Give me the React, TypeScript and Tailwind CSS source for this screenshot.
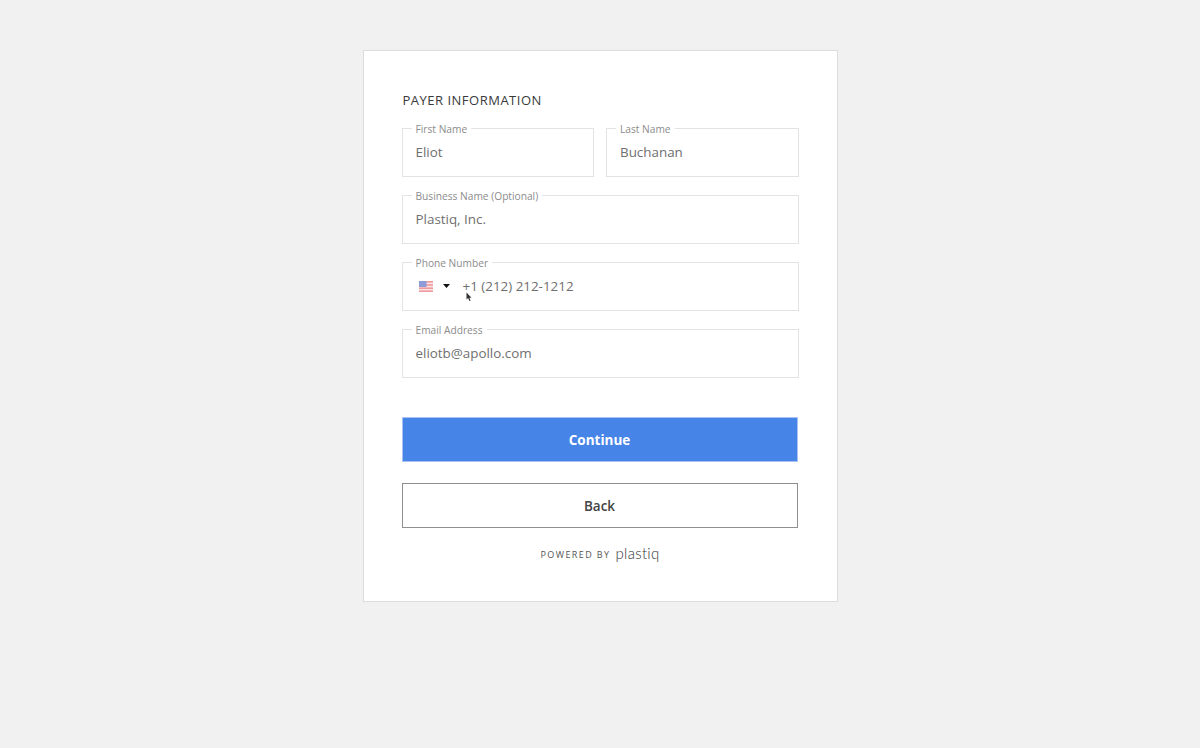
import React from "react";

function Field({ label, children, className = "" }: { label: string; children: React.ReactNode; className?: string }) {
  return (
    <fieldset className={`relative h-[49px] min-w-0 border border-[#e3e3e3] ${className}`}>
      <legend className="ml-[9px] h-0 px-[4px] text-[10.2px] leading-[0px] text-[#8c8c8c]">{label}</legend>
      <div className="flex h-[46px] items-center pl-[13px] text-[13.4px] leading-[20px] text-[#6f6f6f]">{children}</div>
    </fieldset>
  );
}

function Flag() {
  return (
    <svg width="14" height="11" viewBox="0 0 14 11" className="shrink-0">
      <rect width="14" height="11" fill="#fbe3e3" />
      <rect y="0" width="14" height="1.6" fill="#ee9a9f" />
      <rect y="3.2" width="14" height="1.6" fill="#ee9a9f" />
      <rect y="6.4" width="14" height="1.6" fill="#ee9a9f" />
      <rect y="9.4" width="14" height="1.6" fill="#ee9a9f" />
      <rect width="7.5" height="6" fill="#8f9bd6" />
    </svg>
  );
}

export default function App() {
  return (
    <div className="flex min-h-[748px] justify-center bg-[#f1f1f1] pt-[50px] font-['Open_Sans',sans-serif]">
      <div className="h-[552px] w-[475px] border border-[#dddddd] bg-white px-[38px] pt-[39px]">
        <h1 className="pl-[1px] text-[13px] font-normal leading-[20px] tracking-[0.5px] text-[#3a3a3a]">PAYER INFORMATION</h1>
        <div className="mt-[18px] flex flex-col gap-[18px]">
          <div className="flex gap-[12px]">
            <Field label="First Name" className="flex-1">Eliot</Field>
            <Field label="Last Name" className="flex-1">Buchanan</Field>
          </div>
          <Field label="Business Name (Optional)">Plastiq, Inc.</Field>
          <Field label="Phone Number">
            <div className="flex items-center">
              <span className="ml-[3px] flex"><Flag /></span>
              <svg width="7" height="4" viewBox="0 0 7 4" className="ml-[10px] shrink-0">
                <path d="M0 0h7L3.5 4z" fill="#111" />
              </svg>
              <span className="ml-[13px]">+1 (212) 212-1212</span>
            </div>
            <svg width="6" height="10" viewBox="0 0 6 10" className="absolute left-[63px] top-[29px]">
              <path d="M0.5 0.5v7l1.6-1.4L3.4 9l1.2-.5L3.3 5.7h2.2z" fill="#333" />
            </svg>
          </Field>
          <Field label="Email Address">eliotb@apollo.com</Field>
        </div>
        <button className="mt-[39px] flex h-[45px] w-[396px] items-center justify-center border border-[#a9c4f2] bg-[#4684e8] pt-[2px] text-[13.5px] font-bold text-white">
          Continue
        </button>
        <button className="mt-[21px] flex h-[45px] w-[396px] items-center justify-center border border-[#8f8f8f] bg-white pt-[2px] text-[13.5px] font-semibold text-[#444444]">
          Back
        </button>
        <div className="mt-[18px] flex items-center justify-center gap-[5px]">
          <span className="pt-[2px] text-[9px] leading-[14px] tracking-[1.4px] text-[#555555]">POWERED BY</span>
          <span className="pb-[2px] font-['Lato',sans-serif] text-[15px] font-light leading-[14px] tracking-[0.3px] text-[#333333]">plastiq</span>
        </div>
      </div>
    </div>
  );
}
